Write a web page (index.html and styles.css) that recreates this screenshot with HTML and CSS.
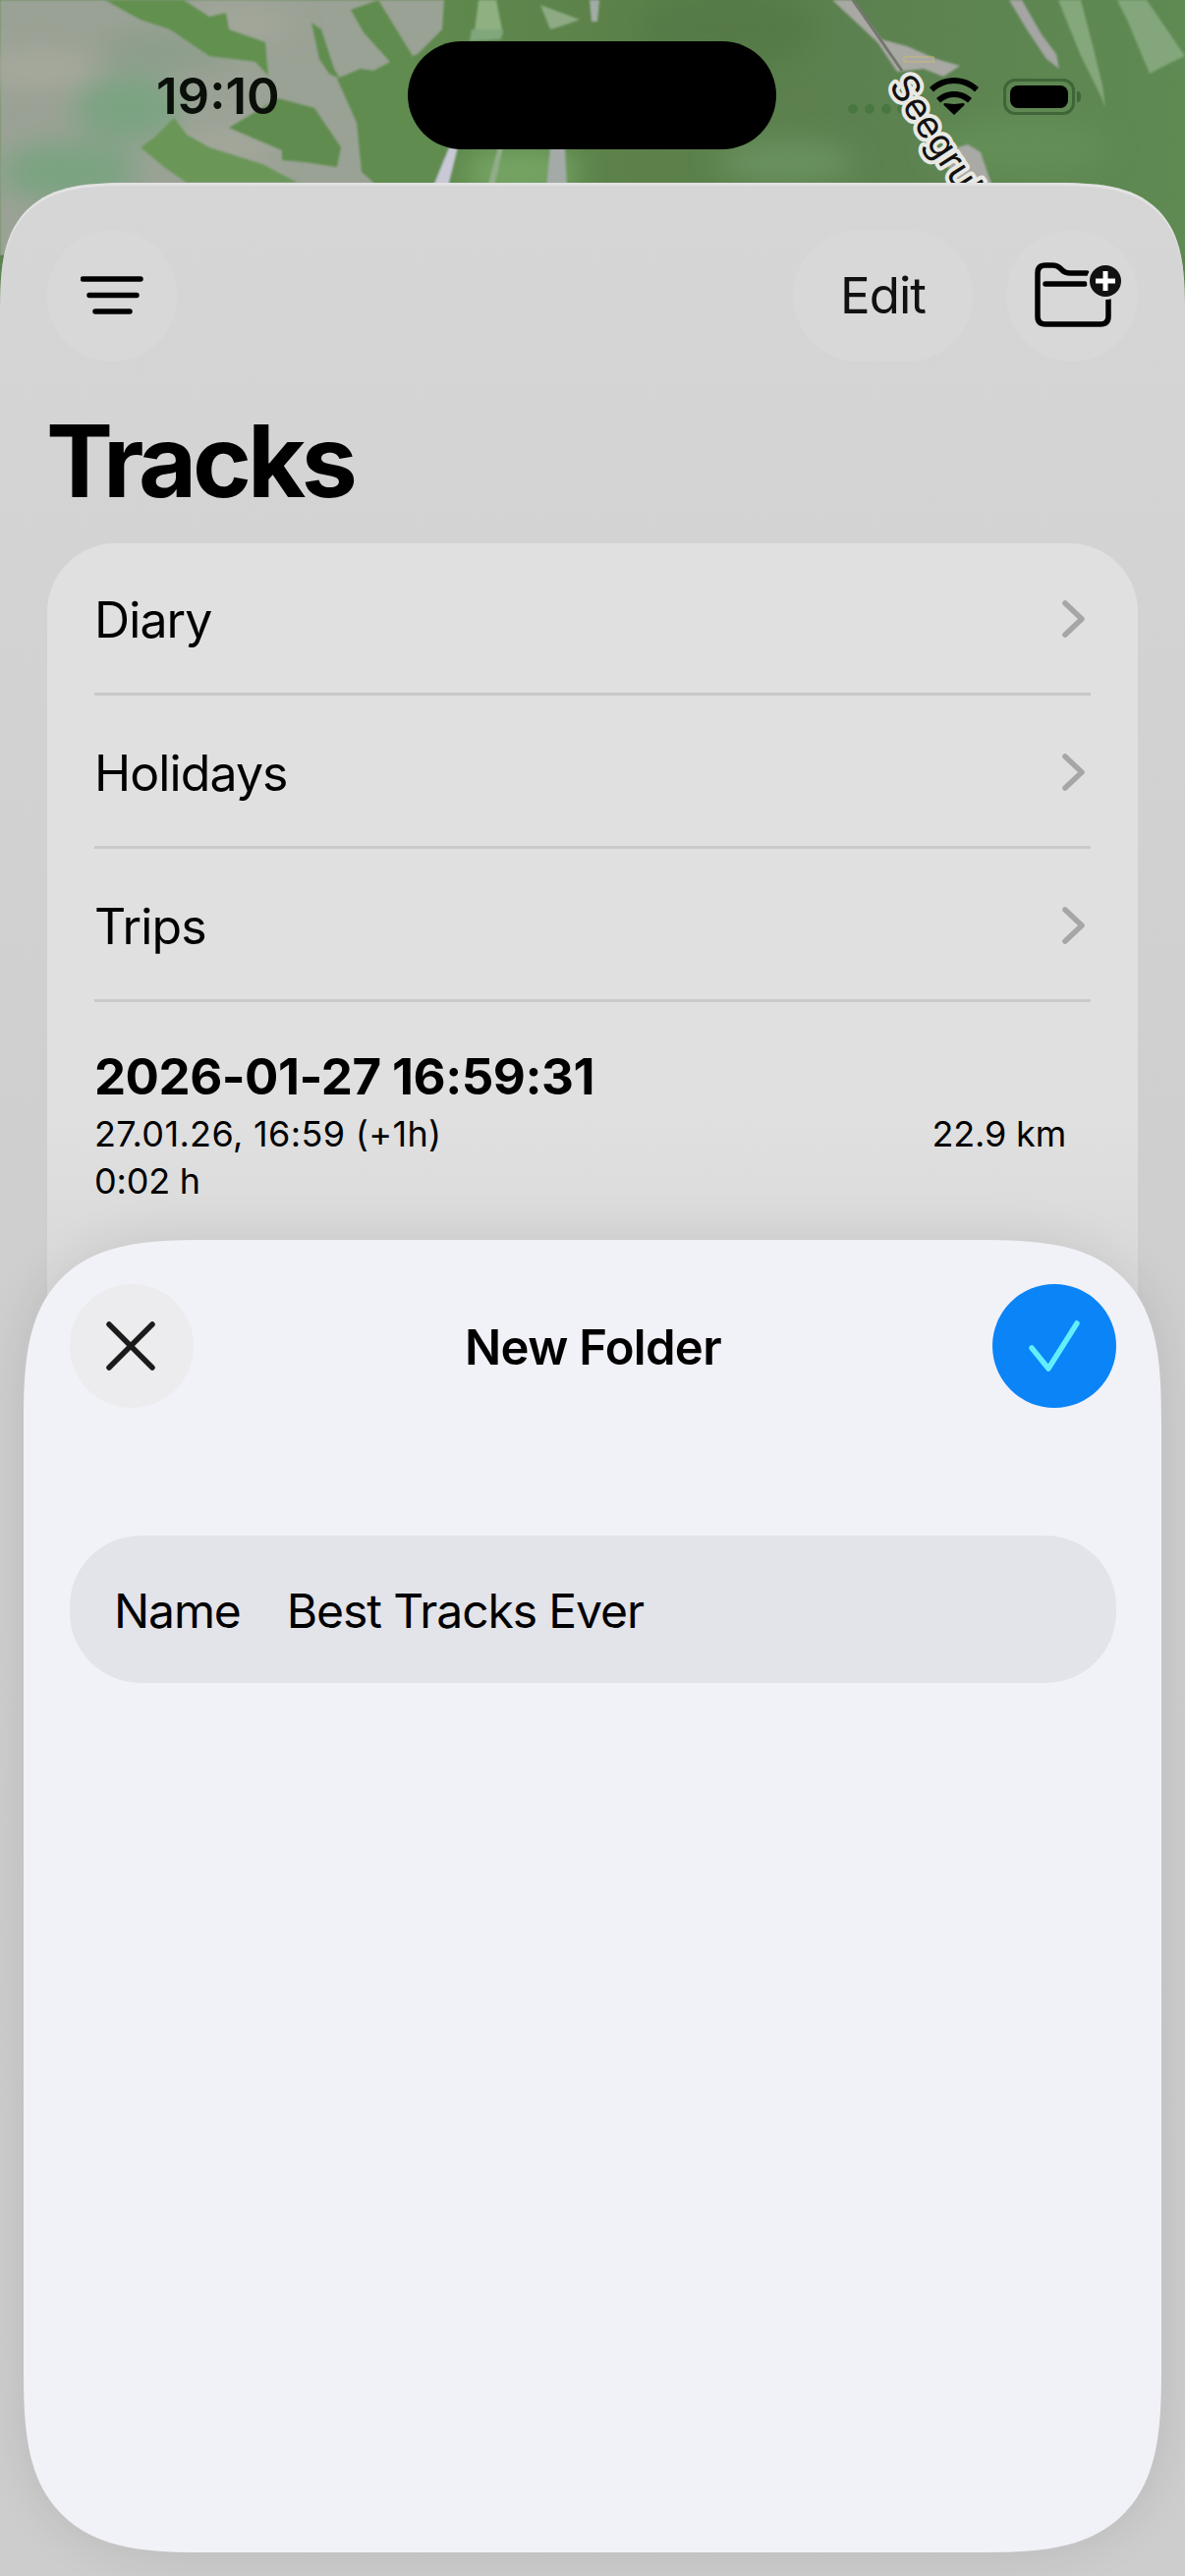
FILE: index.html
```html
<!DOCTYPE html>
<html lang="en">
<head>
<meta charset="utf-8">
<title>Tracks</title>
<link rel="stylesheet" href="styles.css">
</head>
<body>
<div class="screen">
  <svg class="map" viewBox="0 0 1206 260" width="1206" height="260" aria-hidden="true">
    <defs>
      <linearGradient id="base" x1="0" y1="0" x2="1" y2="0">
        <stop offset="0.3" stop-color="#618c4f"/>
        <stop offset="0.55" stop-color="#5b8049"/>
        <stop offset="0.72" stop-color="#5c8150"/>
        <stop offset="1" stop-color="#5f8a52"/>
      </linearGradient>
      <filter id="soft"><feGaussianBlur stdDeviation="14"/></filter>
      <filter id="edge"><feGaussianBlur stdDeviation="1"/></filter>
    </defs>
    <rect width="1206" height="260" fill="url(#base)"/>
    <g filter="url(#soft)">
      <ellipse cx="530" cy="175" rx="60" ry="26" fill="#74a463"/>
      <ellipse cx="740" cy="30" rx="90" ry="40" fill="#557a46"/>
      <ellipse cx="800" cy="165" rx="70" ry="22" fill="#6a9160"/>
      <ellipse cx="1040" cy="150" rx="90" ry="30" fill="#638e56"/>
    </g>
    <g filter="url(#edge)">
      <polygon fill="#9aa295" points="0,0 452,0 450,30 425,55 420,57 385,100 385,260 0,260"/>
    </g>
    <g filter="url(#soft)">
      <ellipse cx="130" cy="110" rx="55" ry="35" fill="#7ca382"/>
      <ellipse cx="70" cy="175" rx="70" ry="30" fill="#7aa381"/>
      <ellipse cx="40" cy="70" rx="60" ry="16" fill="#a8aa9e"/>
      <ellipse cx="240" cy="25" rx="60" ry="14" fill="#a6a89c"/>
      <ellipse cx="170" cy="50" rx="70" ry="20" fill="#8c9d8c"/>
      <ellipse cx="230" cy="150" rx="50" ry="18" fill="#a4a79b"/>
    </g>
    <g filter="url(#edge)">
      <polygon fill="#62904f" points="107,0 187,0 213,17 230,13 233,30 270,43 273,77 260,63 213,57 173,30 143,20 130,13"/>
      <polygon fill="#618c4f" points="233,130 283,100 320,110 347,150 343,170 310,165 287,163 287,153 240,133"/>
      <polygon fill="#6a9658" points="143,150 157,140 177,120 190,137 213,150 267,167 303,186 190,186 167,170"/>
      <polygon fill="#618c4f" points="317,23 327,30 340,70 346,80 335,75 325,60"/>
      <polygon fill="#618c4f" points="343,80 367,70 380,72 397,63 370,33 357,10 385,0 420,57 460,190 385,190 368,175 363,125"/>
      <polygon fill="#8fb181" points="487,0 505,0 512,35 482,40"/>
      <polygon fill="#80a67c" points="480,30 512,30 510,40 478,42"/>
      <polygon fill="#8eaa84" points="550,5 590,20 570,27 560,30"/>
      <polygon fill="#a2aca6" points="600,0 610,0 608,22 602,22"/>
      <polygon fill="#c8c8d6" points="457,150 466,150 456,190 441,190"/>
      <polygon fill="#92ad8b" points="507,150 512,150 503,190 496,190"/>
      <polygon fill="#a3aaa8" points="560,150 575,150 577,190 556,190"/>
      <polygon fill="#a9a9a4" points="847,0 867,0 897,40 923,47 953,60 977,67 960,78 940,70 913,73 893,43"/>
      <polygon fill="#a9a9a6" points="958,155 985,147 998,155 1010,190 975,190"/>
      <polygon fill="#a5a5a4" points="1027,0 1040,0 1060,35 1075,55 1078,70 1065,60 1045,30"/>
      <polygon fill="#85a77c" points="1077,0 1100,0 1113,50 1122,87 1125,110 1120,97 1100,57"/>
      <polygon fill="#83a67c" points="1137,0 1167,0 1206,57 1193,63 1170,75 1147,20"/>
    </g>
    <line x1="868" y1="0" x2="918" y2="72" stroke="#74766f" stroke-width="3"/>
    <rect x="920" y="58" width="30" height="5" fill="none" stroke="#c9b878" stroke-width="1"/>
    <g fill="#487840">
      <circle cx="868" cy="111" r="5"/><circle cx="885" cy="111" r="5"/><circle cx="902" cy="111" r="5"/><circle cx="918" cy="111" r="5"/>
    </g>
    <text class="map-label" transform="translate(904 87) rotate(57)">Seegrube</text>
  </svg>

  <div class="status">
    <span class="time">19:10</span>
    <div class="island"></div>
    <div class="status-icons">
      <svg class="wifi" viewBox="0 0 50 38" width="50" height="38"><path d="M25 27 l9.500 -1 q2 1 .5 2.500 L25 38 15 28.500 q-1.500 -1.500 .5 -2.500z M25 14 c7 0 13 2.500 18 7 l-4 4.500 C35 22 30.500 20 25 20 s-10 2 -14 5.500 L7 21 c5 -4.500 11 -7 18 -7z M25 0 c9.500 0 18 3.500 25 10 l-4 4.500 C40 9 33 6 25 6 S10 9 4 14.500 L0 10 C7 3.500 15.500 0 25 0z"/></svg>
      <div class="battery"><div class="battery-fill"></div></div>
      <div class="battery-cap"></div>
    </div>
  </div>

  <main class="back-sheet">
    <header class="toolbar">
      <button class="tool round menu" type="button" aria-label="Menu">
        <svg viewBox="0 0 64 40" width="64" height="40" class="ico"><path d="M2.500 4H61M9 20.500H57M15 37H50"/></svg>
      </button>
      <div class="toolbar-right">
        <button class="tool edit" type="button">Edit</button>
        <button class="tool round" type="button" aria-label="New folder">
          <svg viewBox="0 0 96 76" width="96" height="76" class="ico folder">
            <path d="M79 44V61q0 8 -8 8H15q-8 0 -8 -8V17q0 -8 8 -8H22q5 0 8 3l2 2q3 3 8 3H57M15 28H55"/>
            <circle cx="76" cy="25" r="17.500" class="plus-disc"/>
            <path d="M76 15V35M66 25H86" class="plus"/>
          </svg>
        </button>
      </div>
    </header>
    <h1 class="title">Tracks</h1>
    <section class="card">
      <div class="row folder-row"><span>Diary</span><svg class="chev" viewBox="0 0 24 38" width="24" height="38"><path d="M3 3L20 19L3 35"/></svg></div>
      <div class="row folder-row"><span>Holidays</span><svg class="chev" viewBox="0 0 24 38" width="24" height="38"><path d="M3 3L20 19L3 35"/></svg></div>
      <div class="row folder-row"><span>Trips</span><svg class="chev" viewBox="0 0 24 38" width="24" height="38"><path d="M3 3L20 19L3 35"/></svg></div>
      <div class="track">
        <div class="track-name">2026-01-27 16:59:31</div>
        <div class="track-meta"><span class="track-date">27.01.26, 16:59 (+1h)</span><span>22.9 km</span></div>
        <div class="track-meta"><span>0:02 h</span></div>
      </div>
    </section>
  </main>

  <section class="front-sheet">
    <header class="sheet-head">
      <button class="sheet-btn close" type="button" aria-label="Close">
        <svg viewBox="0 0 50 50" width="50" height="50"><path d="M3 3L47 47M47 3L3 47"/></svg>
      </button>
      <h2 class="sheet-title">New Folder</h2>
      <button class="sheet-btn confirm" type="button" aria-label="Done">
        <svg viewBox="0 0 52 52" width="52" height="52"><path d="M3 28L20 49L49 3"/></svg>
      </button>
    </header>
    <div class="field">
      <span class="field-label">Name</span>
      <span class="field-value">Best Tracks Ever</span>
    </div>
  </section>
</div>
</body>
</html>
```
FILE: styles.css
```css
* { box-sizing: border-box; }
html, body { margin: 0; padding: 0; }
body { font-family: Inter, "Liberation Sans", sans-serif; color: #000; }
button { font: inherit; color: inherit; border: 0; padding: 0; }

.screen {
  position: relative;
  width: 1206px;
  height: 2622px;
  overflow: hidden;
  background: #5d8350;
}

.map { position: absolute; left: 0; top: 0; display: block; }
.map-label {
  font-family: Inter, sans-serif;
  font-size: 38px;
  fill: #111;
  stroke: #e9e9e4;
  stroke-width: 8px;
  stroke-linejoin: round;
  paint-order: stroke;
}

.status {
  position: relative;
  height: 186px;
  display: flex;
  align-items: flex-start;
  padding: 42px 0 0 159px;
}
.time {
  width: 256px;
  margin-top: 31px;
  font-size: 51px;
  line-height: 50px;
  font-weight: 600;
  color: #0a0f0a;
}
.island { width: 375px; height: 110px; border-radius: 55px; background: #000; }
.status-icons { display: flex; align-items: center; margin: 37px 0 0 156px; }
.wifi { fill: #000; margin-top: 0; }
.battery {
  width: 73px;
  height: 37px;
  margin-left: 25px;
  padding: 4px;
  border: 3px solid #3f6538;
  border-radius: 12px;
}
.battery-fill { height: 100%; background: #000; border-radius: 8px; }
.battery-cap { width: 4px; height: 11px; margin-left: 2px; background: #3f6538; border-radius: 0 4px 4px 0; }

.back-sheet {
  position: relative;
  height: 2436px;
  padding: 0 48px;
  border-radius: 100px 100px 0 0;
  background: linear-gradient(#d6d6d7 0, #d3d3d3 400px, #cfcfcf 1000px, #cdcdcd 100%);
  box-shadow: inset 0 3px 0 rgba(255, 255, 255, .3);
}

.toolbar {
  display: flex;
  justify-content: space-between;
  padding-top: 48px;
}
.toolbar-right { display: flex; gap: 34px; }
.tool {
  height: 134px;
  display: flex;
  align-items: center;
  justify-content: center;
  background: #d8d8d8;
  border-radius: 67px;
}
.tool.round { width: 134px; }
.tool.menu { width: 132px; }
.tool.menu svg { margin-top: -2px; }
.tool.edit { width: 183px; padding-bottom: 2px; font-size: 51px; letter-spacing: -1px; color: #111; }
.ico { fill: none; stroke: #000; stroke-width: 5.500; stroke-linecap: round; stroke-linejoin: round; }
.folder { flex: none; margin-left: 12px; margin-top: -4px; }
.plus-disc { fill: #111; stroke: #d8d8d8; stroke-width: 3; }
.plus { stroke: #fff; stroke-width: 5; stroke-linecap: butt; }

.title {
  margin: 45px 0 0 -1px;
  font-size: 102px;
  line-height: 112px;
  font-weight: 700;
  letter-spacing: -4.200px;
}

.card {
  margin-top: 28px;
  height: 1000px;
  padding: 0 48px;
  border-radius: 70px;
  background: linear-gradient(#e0e0e0 0, #e0e0e0 580px, #dbdbdb 700px);
}
.row {
  height: 156px;
  display: flex;
  align-items: center;
  justify-content: space-between;
  border-bottom: 3px solid #c9c9c9;
  font-size: 50px;
  letter-spacing: -.9px;
}
.row:first-child { height: 155px; }
.folder-row span { padding-top: 4px; }
.chev { fill: none; stroke: #a6a6a6; stroke-width: 5.500; stroke-linecap: round; stroke-linejoin: round; margin: 2px 5px 0 0; }

.track { padding-top: 46px; }
.track-name { margin-bottom: 4px; font-size: 51px; line-height: 60px; font-weight: 700; letter-spacing: -.5px; }
.track-meta {
  display: flex;
  justify-content: space-between;
  padding-right: 25px;
  font-size: 36px;
  line-height: 48px;
  letter-spacing: -.2px;
}
.track-date { letter-spacing: .35px; }

.front-sheet {
  position: absolute;
  left: 24px;
  right: 24px;
  top: 1262px;
  bottom: 24px;
  padding: 45px 46px 0 47px;
  border-radius: 130px;
  background: #f1f1f8;
  box-shadow: 0 0 50px rgba(0, 0, 0, .1);
}
@supports (corner-shape: squircle) {
  .front-sheet { border-radius: 190px; corner-shape: superellipse(1.6); }
  .back-sheet { border-radius: 135px 135px 0 0; corner-shape: superellipse(1.6); }
}
.sheet-head { display: flex; align-items: center; justify-content: space-between; }
.sheet-btn {
  width: 126px;
  height: 126px;
  border-radius: 50%;
  display: flex;
  align-items: center;
  justify-content: center;
}
.sheet-btn svg { fill: none; stroke-linecap: round; stroke-linejoin: round; }
.close { background: #ececee; }
.close svg { stroke: #1b1b1b; stroke-width: 5.500; margin-left: -2px; }
.confirm { background: #0a84f7; }
.confirm svg { stroke: #62eefc; stroke-width: 5.500; }
.sheet-title { margin: 3px 0 0; font-size: 49px; font-weight: 600; letter-spacing: -.7px; line-height: 60px; }

.field {
  margin-top: 130px;
  height: 150px;
  display: flex;
  align-items: center;
  gap: 47px;
  padding: 3px 45px 0;
  border-radius: 72px;
  background: #e3e3ea;
  font-size: 48px;
  letter-spacing: -1.100px;
}
```
